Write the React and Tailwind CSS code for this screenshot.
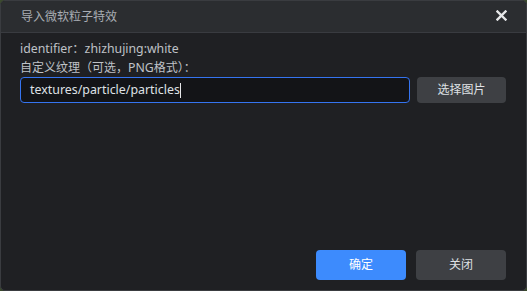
import { useState } from "react"

export default function App() {
    const [texture] = useState("textures/particle/particles")

    return (
        <div className="w-[527px] h-[291px] bg-[#3b4a2e] font-['Noto_Sans','Noto_Sans_CJK_SC',sans-serif]">
            <div className="flex flex-col w-full h-full rounded-[5px] border border-[#3a3c40] bg-[#1f2023] overflow-hidden">
                <div className="flex items-center justify-between h-[32px] shrink-0 bg-[#2b2d30] border-b border-[#393b40] pl-[20px] pr-[19px]">
                    <span className="text-[12px] text-[#a9adb4]">导入微软粒子特效</span>
                    <svg width="11" height="11" viewBox="0 0 11 11" className="mt-[-2px]">
                        <path d="M1.5 1.5 L9.5 9.5 M9.5 1.5 L1.5 9.5" stroke="#e6e7e9" strokeWidth="2.4" strokeLinecap="square" />
                    </svg>
                </div>
                <div className="flex flex-col flex-1 px-[19px] pt-[7px] pb-[10px]">
                    <div className="text-[12.3px] leading-[18px] text-[#bfc2c7]">identifier：zhizhujing:white</div>
                    <div className="text-[12px] leading-[18px] text-[#bfc2c7] font-['Noto_Sans_CJK_SC',sans-serif]">
                        自定义纹理（可选，<span className="font-['Noto_Sans',sans-serif] text-[12.3px]">PNG</span>格式）：
                    </div>
                    <div className="flex gap-[7px]">
                        <div className="flex items-center w-[390px] h-[26px] rounded-[4px] border border-[#3574f0] bg-[#131417] px-[9px] text-[12.4px] text-[#dfe1e5]">
                            <span>{texture}</span>
                            <span className="w-px h-[15px] bg-[#e6e7e9]"></span>
                        </div>
                        <button className="w-[89px] h-[26px] rounded-[4px] bg-[#3e4044] text-[12px] text-[#dfe1e5]">
                            选择图片
                        </button>
                    </div>
                    <div className="flex justify-end gap-[10px] mt-auto pr-[1px]">
                        <button className="w-[90px] h-[30px] rounded-[4px] bg-[#3d8bfd] text-[12px] text-white">确定</button>
                        <button className="w-[90px] h-[30px] rounded-[4px] bg-[#3e4044] text-[12px] text-[#dfe1e5]">关闭</button>
                    </div>
                </div>
            </div>
        </div>
    )
}
